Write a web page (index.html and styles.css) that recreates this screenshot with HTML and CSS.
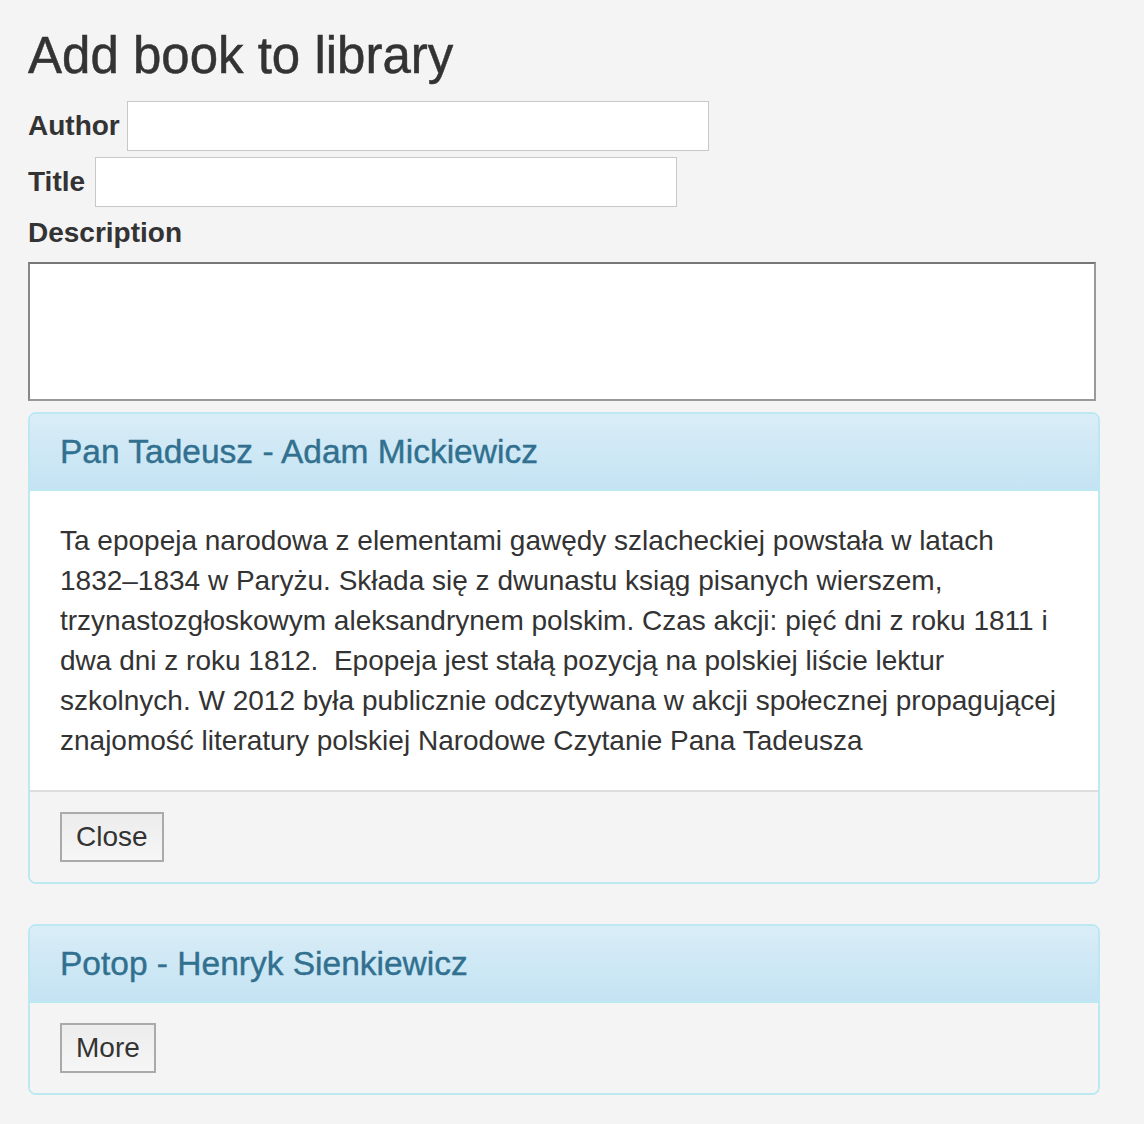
FILE: index.html
```html
<!DOCTYPE html>
<html lang="pl">
<head>
<meta charset="utf-8">
<title>Add book to library</title>
<link rel="stylesheet" href="styles.css">
</head>
<body>
<div class="page">
  <h1 class="page-title">Add book to library</h1>
  <form class="book-form">
    <div class="form-row">
      <label class="form-label" for="author">Author</label>
      <input class="form-input" id="author" type="text">
    </div>
    <div class="form-row">
      <label class="form-label label-title" for="title">Title</label>
      <input class="form-input" id="title" type="text">
    </div>
    <label class="form-label block-label" for="desc">Description</label>
    <textarea class="form-textarea" id="desc"></textarea>
  </form>

  <div class="panel">
    <div class="panel-heading"><h3 class="panel-title">Pan Tadeusz - Adam Mickiewicz</h3></div>
    <div class="panel-body">
      <p class="panel-text">Ta epopeja narodowa z elementami gawędy szlacheckiej powstała w latach<br>1832–1834 w Paryżu. Składa się z dwunastu ksiąg pisanych wierszem,<br>trzynastozgłoskowym aleksandrynem polskim. Czas akcji: pięć dni z roku 1811 i<br>dwa dni z roku 1812.&nbsp; Epopeja jest stałą pozycją na polskiej liście lektur<br>szkolnych. W 2012 była publicznie odczytywana w akcji społecznej propagującej<br>znajomość literatury polskiej Narodowe Czytanie Pana Tadeusza</p>
    </div>
    <div class="panel-footer"><button class="btn" type="button">Close</button></div>
  </div>

  <div class="panel">
    <div class="panel-heading"><h3 class="panel-title">Potop - Henryk Sienkiewicz</h3></div>
    <div class="panel-footer"><button class="btn" type="button">More</button></div>
  </div>
</div>
</body>
</html>
```
FILE: styles.css
```css
html, body {
  margin: 0;
  padding: 0;
  background: #f4f4f4;
}
body {
  font-family: "Liberation Sans", Arial, Helvetica, sans-serif;
  font-size: 28px;
  line-height: 40px;
  color: #333;
}
.page {
  padding: 29px 44px 30px 28px;
}
.page-title {
  margin: 0 0 19px;
  font-size: 51px;
  line-height: 53px;
  font-weight: 500;
  color: #333;
  -webkit-text-stroke: 0.5px #333;
}
.book-form {
  margin: 0;
}
.form-row {
  display: flex;
  align-items: center;
  gap: 7px;
  height: 50px;
  margin-bottom: 6px;
}
.form-label {
  font-weight: bold;
  font-size: 28px;
  line-height: 40px;
}
.label-title {
  margin-right: 3px;
}
.block-label {
  display: block;
  margin-top: 0;
  margin-bottom: 9px;
  padding-top: 0;
}
.form-input {
  box-sizing: border-box;
  width: 582px;
  height: 50px;
  margin: 0;
  border: 1px solid #c8c8c8;
  background: #fff;
  font-size: 28px;
  font-family: inherit;
  padding: 0 8px;
}
.form-textarea {
  display: block;
  box-sizing: border-box;
  width: 1068px;
  height: 139px;
  margin: 0 0 11px;
  border: 2px solid #999;
  border-top-color: #777;
  border-left-color: #888;
  background: #fff;
  resize: none;
  font-family: inherit;
  font-size: 28px;
}
.panel {
  border: 2px solid #bce8f1;
  border-radius: 8px;
  background: #fff;
  margin-bottom: 40px;
  overflow: hidden;
}
.panel-heading {
  padding: 20px 30px;
  background: linear-gradient(to bottom, #d9edf7 0%, #c4e3f3 100%);
  border-bottom: 2px solid #bce8f1;
}
.panel-title {
  margin: 0;
  font-size: 33.5px;
  line-height: 35px;
  font-weight: 500;
  color: #31708f;
  -webkit-text-stroke: 0.4px #31708f;
}
.panel-body {
  padding: 30px 30px 29px;
  background: #fff;
}
.panel-text {
  margin: 0;
  font-size: 28px;
  line-height: 40px;
  white-space: nowrap;
}
.panel-body + .panel-footer {
  border-top: 2px solid #ddd;
}
.panel-footer {
  padding: 20px 30px;
  background: #f4f4f4;
  display: flex;
}
.btn {
  box-sizing: border-box;
  height: 50px;
  padding: 0 14px;
  margin: 0;
  border: 2px solid #aaa;
  border-radius: 0;
  background: linear-gradient(to bottom, #ececec 0%, #f6f6f6 100%);
  font-family: inherit;
  font-size: 28px;
  line-height: 46px;
  color: #333;
}
```
